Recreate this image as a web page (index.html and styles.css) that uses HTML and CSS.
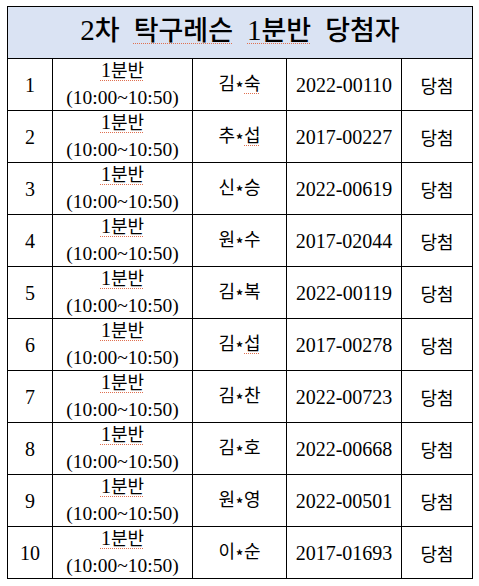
FILE: index.html
```html
<!DOCTYPE html>
<html lang="ko">
<head>
<meta charset="utf-8">
<link rel="stylesheet" href="styles.css">
</head>
<body>
<div class="sheet">
  <div class="title"><span class="ttext"><span class="tnum">2</span><span class="tko">차</span> <span class="tko spell">탁구레슨</span> <span class="spell"><span class="tnum">1</span><span class="tko">분반</span></span> <span class="tko">당첨자</span></span></div>

  <div class="cell">1</div>
  <div class="cell two"><div class="l1"><span class="spell">1<span class="ko">분반</span></span></div><div class="l2">(10:00~10:50)</div></div>
  <div class="cell"><span class="ko">김<span class="star">*</span><span class="spell">숙</span></span></div>
  <div class="cell">2022-00110</div>
  <div class="cell"><span class="ko">당첨</span></div>

  <div class="cell">2</div>
  <div class="cell two"><div class="l1"><span class="spell">1<span class="ko">분반</span></span></div><div class="l2">(10:00~10:50)</div></div>
  <div class="cell"><span class="ko">추<span class="star">*</span><span class="spell">섭</span></span></div>
  <div class="cell">2017-00227</div>
  <div class="cell"><span class="ko">당첨</span></div>

  <div class="cell">3</div>
  <div class="cell two"><div class="l1"><span class="spell">1<span class="ko">분반</span></span></div><div class="l2">(10:00~10:50)</div></div>
  <div class="cell"><span class="ko">신<span class="star">*</span>승</span></div>
  <div class="cell">2022-00619</div>
  <div class="cell"><span class="ko">당첨</span></div>

  <div class="cell">4</div>
  <div class="cell two"><div class="l1"><span class="spell">1<span class="ko">분반</span></span></div><div class="l2">(10:00~10:50)</div></div>
  <div class="cell"><span class="ko">원<span class="star">*</span>수</span></div>
  <div class="cell">2017-02044</div>
  <div class="cell"><span class="ko">당첨</span></div>

  <div class="cell">5</div>
  <div class="cell two"><div class="l1"><span class="spell">1<span class="ko">분반</span></span></div><div class="l2">(10:00~10:50)</div></div>
  <div class="cell"><span class="ko">김<span class="star">*</span>복</span></div>
  <div class="cell">2022-00119</div>
  <div class="cell"><span class="ko">당첨</span></div>

  <div class="cell">6</div>
  <div class="cell two"><div class="l1"><span class="spell">1<span class="ko">분반</span></span></div><div class="l2">(10:00~10:50)</div></div>
  <div class="cell"><span class="ko">김<span class="star">*</span><span class="spell">섭</span></span></div>
  <div class="cell">2017-00278</div>
  <div class="cell"><span class="ko">당첨</span></div>

  <div class="cell">7</div>
  <div class="cell two"><div class="l1"><span class="spell">1<span class="ko">분반</span></span></div><div class="l2">(10:00~10:50)</div></div>
  <div class="cell"><span class="ko">김<span class="star">*</span>찬</span></div>
  <div class="cell">2022-00723</div>
  <div class="cell"><span class="ko">당첨</span></div>

  <div class="cell">8</div>
  <div class="cell two"><div class="l1"><span class="spell">1<span class="ko">분반</span></span></div><div class="l2">(10:00~10:50)</div></div>
  <div class="cell"><span class="ko">김<span class="star">*</span>호</span></div>
  <div class="cell">2022-00668</div>
  <div class="cell"><span class="ko">당첨</span></div>

  <div class="cell">9</div>
  <div class="cell two"><div class="l1"><span class="spell">1<span class="ko">분반</span></span></div><div class="l2">(10:00~10:50)</div></div>
  <div class="cell"><span class="ko">원<span class="star">*</span>영</span></div>
  <div class="cell">2022-00501</div>
  <div class="cell"><span class="ko">당첨</span></div>

  <div class="cell">10</div>
  <div class="cell two"><div class="l1"><span class="spell">1<span class="ko">분반</span></span></div><div class="l2">(10:00~10:50)</div></div>
  <div class="cell"><span class="ko">이<span class="star">*</span>순</span></div>
  <div class="cell">2017-01693</div>
  <div class="cell"><span class="ko">당첨</span></div>
</div>
</body>
</html>
```
FILE: styles.css
```css
html, body {
  margin: 0;
  padding: 0;
  background: #ffffff;
}
body {
  font-family: "Liberation Serif", "Noto Sans CJK KR", serif;
  color: #000;
}
.sheet {
  margin: 6px 0 0 7px;
  width: 466px;
  box-sizing: border-box;
  display: grid;
  grid-template-columns: 45px 140px 94px 115px 71px;
  grid-auto-rows: 52px;
  border-left: 1px solid #000;
  border-top: 1px solid #000;
}
.title {
  grid-column: 1 / -1;
  box-sizing: border-box;
  border-right: 1px solid #000;
  border-bottom: 1px solid #000;
  background: #dae3f3;
  display: flex;
  align-items: center;
  justify-content: center;
  padding: 0 0 2px 0;
}
.ttext {
  white-space: pre;
  word-spacing: 10px;
  line-height: 40px;
}
.tnum {
  font-family: "Liberation Serif", serif;
  font-size: 29px;
}
.tko {
  font-family: "Noto Sans CJK KR", sans-serif;
  font-size: 27px;
  font-weight: 500;
}
.cell {
  box-sizing: border-box;
  border-right: 1px solid #000;
  border-bottom: 1px solid #000;
  display: flex;
  flex-direction: column;
  align-items: center;
  justify-content: center;
  font-size: 20px;
  line-height: 24px;
}
.two {
  line-height: 27px;
  padding-bottom: 3px;
}
.l2 {
  font-size: 19.5px;
}
.ko {
  font-family: "Noto Sans CJK KR", sans-serif;
  font-size: 18px;
  font-weight: 400;
}
.star {
  font-size: 14px;
  font-weight: 700;
  margin: 0 1px;
  vertical-align: -3px;
}
.spell {
  text-decoration: underline dotted #e07050;
  text-decoration-thickness: 1px;
  text-underline-offset: 3px;
}
```
